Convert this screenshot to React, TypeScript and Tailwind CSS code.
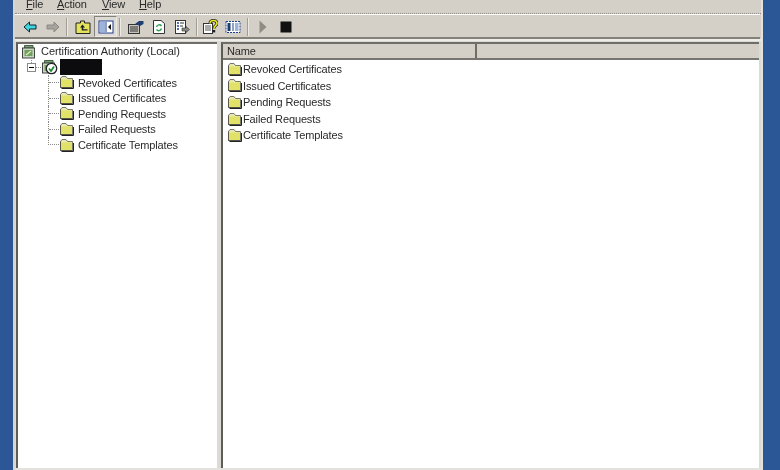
const FONT = "font-['Liberation_Sans',sans-serif]";

const items = [
  "Revoked Certificates",
  "Issued Certificates",
  "Pending Requests",
  "Failed Requests",
  "Certificate Templates",
];

function Folder() {
  return (
    <svg viewBox="0 0 15 14" width="15" height="14" className="-mt-[1px] shrink-0">
      <path d="M1.5 3.5 L3 1.5 H7 L8.5 3.5 H13.5 V12.5 H1.5 Z" fill="#e8e8b0" stroke="#77776a" />
      <rect x="2" y="4.5" width="11" height="8" fill="#e2e268" />
      <path d="M1.5 3.5 V12.5 H13.5" fill="none" stroke="#55554a" />
      <path d="M14.5 5 V13.5 H2.5" fill="none" stroke="#222" />
    </svg>
  );
}

function CaIcon({ check = false }: { check?: boolean }) {
  return (
    <svg viewBox="0 0 17 16" width="17" height="16" className="shrink-0">
      <path d="M3.5 1.5 H12 V4 H3.5 Z" fill="#7f9f7f" stroke="#3f5f3f" />
      <rect x="1.5" y="4" width="12" height="10" fill="#c8d8c0" stroke="#444" />
      <rect x="3.5" y="6" width="8" height="6" fill="#6fa060" />
      {check ? (
        <>
          <circle cx="10.5" cy="9.5" r="5.2" fill="#fff" stroke="#222" strokeWidth="1.3" />
          <path d="M8 9.5 L10 12 L13 7.5" fill="none" stroke="#1d8a2a" strokeWidth="1.7" />
        </>
      ) : (
        <path d="M5 11 L10 7" stroke="#e8e8c0" strokeWidth="1.2" />
      )}
    </svg>
  );
}

function Separator({ className }: { className: string }) {
  return <div className={`h-[18px] w-[2px] shrink-0 border-l border-r border-l-[#a09d96] border-r-[#eceae4] ${className}`} />;
}

function ToolIcon({ children, pressed = false }: { children: React.ReactNode; pressed?: boolean }) {
  return (
    <div
      className={`flex w-[23px] shrink-0 items-center justify-center ${
        pressed
          ? "h-[21px] self-start border border-[#ece9e2] border-t-[#85827b] border-l-[#85827b] bg-[#dedbd4]"
          : "h-[22px]"
      }`}
    >
      <svg viewBox="0 0 16 16" width="16" height="16">
        {children}
      </svg>
    </div>
  );
}

function Toolbar() {
  return (
    <div className="mt-[1px] flex h-[22px] items-center pl-[1px]">
      <ToolIcon>
        <path d="M7.5 3 L2 8 L7.5 13 V10 H14 V6 H7.5 Z" fill="#3fd8e0" stroke="#123" />
      </ToolIcon>
      <ToolIcon>
        <path d="M9 3 L14 8 L9 13 V10 H2 V6 H9 Z" fill="#a5a39d" stroke="#8b8982" />
      </ToolIcon>
      <Separator className="ml-[2px] mr-[3px]" />
      <ToolIcon>
        <path d="M1 4 H5.5 V2 H9.5 V4 H15 V14.5 H1 Z" fill="#e4e45c" stroke="#222" />
        <path d="M7.5 5.5 L5 8.5 H6.7 V11.5 H12.5 V10.2 H8.3 V8.5 H10 Z" fill="#222" />
      </ToolIcon>
      <ToolIcon pressed>
        <rect x="1" y="2" width="14" height="12" fill="#fff" stroke="#1f3f8f" />
        <rect x="2" y="3" width="5" height="10" fill="#9db4d8" />
        <path d="M8 3 V13" stroke="#1f3f8f" />
        <path d="M13 5 L10 8 L13 11 Z" fill="#111" />
      </ToolIcon>
      <Separator className="ml-[2px] mr-[3px]" />
      <ToolIcon>
        <rect x="0.5" y="5.5" width="11" height="9" fill="#c8c4bc" stroke="#333" />
        <path d="M2 8 H10 M2 10 H10 M2 12 H10" stroke="#333" />
        <path d="M7 5 L11 2 H15.5 V5 L12 7 Z" fill="#1f3f70" />
      </ToolIcon>
      <ToolIcon>
        <path d="M2.5 1.5 H10 L13.5 4.5 V14.5 H2.5 Z" fill="#fff" stroke="#333" />
        <path d="M5.5 8 A2.8 2.8 0 0 1 10.5 7 M10.5 9.5 A2.8 2.8 0 0 1 5.5 10.5" fill="none" stroke="#2f9f4f" strokeWidth="1.4" />
      </ToolIcon>
      <ToolIcon>
        <rect x="1.5" y="1.5" width="10" height="13" fill="#fff" stroke="#333" />
        <path d="M3 4 H5 M3 7 H5 M3 10 H5" stroke="#1f3f9f" strokeWidth="1.4" />
        <path d="M6 4 H10 M6 7 H9" stroke="#333" />
        <path d="M8 9 H12 V7.5 L15.5 10.5 L12 13.5 V12 H8 Z" fill="#8a8a84" stroke="#333" strokeWidth="0.6" />
      </ToolIcon>
      <Separator className="ml-[3px]" />
      <ToolIcon>
        <rect x="1.5" y="4.5" width="9" height="10" fill="#fff" stroke="#333" />
        <path d="M3 7 H9 M3 9 H9 M3 11 H9" stroke="#555" />
        <path d="M8 4.5 C8 0.5 15 0.5 15 4.5 C15 6.5 12 6.5 12 9.5" fill="none" stroke="#222" strokeWidth="3" />
        <path d="M8 4.5 C8 0.5 15 0.5 15 4.5 C15 6.5 12 6.5 12 9.5" fill="none" stroke="#ecec20" strokeWidth="1.6" />
        <rect x="10.8" y="11" width="2.4" height="2.4" fill="#222" />
      </ToolIcon>
      <ToolIcon>
        <rect x="1" y="2.5" width="14" height="11" fill="#fff" stroke="#1f3f8f" strokeDasharray="2 1" />
        <rect x="2.5" y="4" width="3" height="8" fill="#1f3f6f" />
        <path d="M8 4 V12" stroke="#1f3f8f" />
        <rect x="10" y="4" width="3.5" height="8" fill="#9db4d8" />
      </ToolIcon>
      <Separator className="ml-[3px] mr-[2px]" />
      <ToolIcon>
        <path d="M4.5 1.5 L11.5 8 L4.5 14.5 Z" fill="#8f8c85" />
      </ToolIcon>
      <ToolIcon>
        <rect x="2.5" y="2.5" width="11" height="11" fill="#111" />
      </ToolIcon>
    </div>
  );
}

function TreeRow({ label, last }: { label: string; last: boolean }) {
  return (
    <div className={`flex h-[15.6px] items-center ${last ? "" : "border-l border-dotted border-l-[#8a8a8a]"}`}>
      {last ? (
        <div className="h-[8px] w-[11px] shrink-0 self-start border-b border-l border-dotted border-[#8a8a8a]" />
      ) : (
        <div className="w-[10px] shrink-0 border-t border-dotted border-t-[#8a8a8a]" />
      )}
      <Folder />
      <span className="ml-[4px] whitespace-nowrap">{label}</span>
    </div>
  );
}

function MenuItem({ first, rest, className }: { first: string; rest: string; className: string }) {
  return (
    <span className={className}>
      <span className="underline">{first}</span>
      {rest}
    </span>
  );
}

export default function App() {
  return (
    <div className={`h-[470px] w-[780px] overflow-hidden bg-[#2b5797] pl-[13px] pr-[17px] text-[11px] tracking-[-0.13px] text-[#2a2a2a] ${FONT}`}>
      <div className="flex h-[470px] flex-col border-l-2 border-r-2 border-l-[#d9d6cf] border-r-[#e4e2dc] bg-[#d4d0c8] blur-[0.35px]">
        {/* menu */}
        <div className="flex h-[14px] shrink-0 items-center border-b border-dotted border-b-[#8f8c85] pb-[5px] pl-[11px]">
          <MenuItem first="F" rest="ile" className="w-[31px]" />
          <MenuItem first="A" rest="ction" className="w-[45px]" />
          <MenuItem first="V" rest="iew" className="w-[37px]" />
          <MenuItem first="H" rest="elp" className="w-[30px]" />
        </div>
        {/* toolbar */}
        <div className="mr-[1px] flex h-[25px] shrink-0 items-start border-t border-b-2 border-t-white border-b-[#85827b] pl-[2px]">
          <Toolbar />
        </div>
        {/* panes */}
        <div className="flex min-h-0 flex-1 gap-[4px] border-t-2 border-t-[#eeece6] bg-[#dcdad5] pt-[1px] pr-[2px] pl-[1px]">
          <div className="flex w-[201px] shrink-0 flex-col border-t-2 border-l-2 border-t-[#6f6d68] border-l-[#5f5d58] bg-white pl-[3px]">
            <div className="flex h-[15px] items-center gap-[3px] tracking-[-0.06px]">
              <CaIcon />
              <span className="whitespace-nowrap">Certification Authority (Local)</span>
            </div>
            <div className="flex h-[16px] items-center pl-[6px]">
              <div className="relative flex h-[9px] w-[9px] shrink-0 items-center justify-center border border-[#8a8a8a]">
                <div className="h-[1px] w-[5px] bg-black" />
                <div className="absolute -top-[6px] left-[3px] h-[5px] border-l border-dotted border-l-[#8a8a8a]" />
              </div>
              <div className="w-[5px] shrink-0 border-t border-dotted border-t-[#8a8a8a]" />
              <CaIcon check />
              <div className="ml-[2px] h-[16px] w-[42px] bg-[#0c0c0e]" />
            </div>
            <div className="ml-[27px] flex flex-col">
              {items.map((label, i) => (
                <TreeRow key={label} label={label} last={i === items.length - 1} />
              ))}
            </div>
          </div>
          <div className="flex min-w-0 flex-1 flex-col border-t-2 border-l-2 border-t-[#6f6d68] border-l-[#5f5d58] bg-white">
            <div className="flex h-[16px] shrink-0 items-center border-b-2 border-b-[#77756f] bg-[#d4d0c8]">
              <div className="flex h-full w-[254px] items-center border-r-2 border-r-[#6f6d68] pt-[1px] pl-[4px]">Name</div>
            </div>
            <div className="flex flex-col pt-[1px] pl-[4px]">
              {items.map((label) => (
                <div key={label} className="flex h-[16.6px] items-center gap-[1px]">
                  <Folder />
                  <span className="whitespace-nowrap">{label}</span>
                </div>
              ))}
            </div>
          </div>
        </div>
        <div className="h-[2px] shrink-0 bg-[#e4e2dc]" />
      </div>
    </div>
  );
}
